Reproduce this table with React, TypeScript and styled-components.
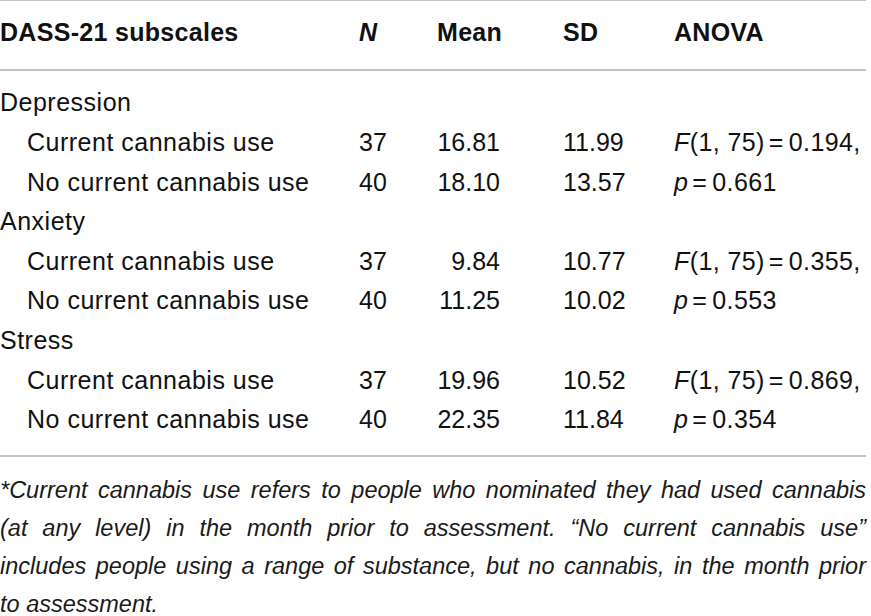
import React from "react";
import styled, { createGlobalStyle } from "styled-components";

const GlobalStyle = createGlobalStyle`
  html, body { margin: 0; padding: 0; background: #ffffff; }
  body { font-family: "Liberation Sans", Arial, Helvetica, sans-serif; color: #111111; }
`;

const COLS = "359px 78px 126px 111px 1fr";
const RULE = "#c4c4c4";

const Sheet = styled.div`
  width: 866px;
  font-family: "Liberation Sans", Arial, Helvetica, sans-serif;
  color: #111111;
`;

const HeadRow = styled.div`
  display: grid;
  grid-template-columns: ${COLS};
  border-top: 1px solid ${RULE};
  border-bottom: 2px solid ${RULE};
  padding: 12px 0 16.4px;
  font-size: 25px;
  line-height: 39.6px;
  font-weight: 700;
  letter-spacing: 0.3px;
`;

const HeadCell = styled.div<{ $italic?: boolean }>`
  font-style: ${(p) => (p.$italic ? "italic" : "normal")};
  white-space: nowrap;
`;

const Body = styled.div`
  display: flex;
  flex-direction: column;
  padding: 12.5px 0 15px;
  border-bottom: 2px solid ${RULE};
`;

const Row = styled.div`
  display: grid;
  grid-template-columns: ${COLS};
  font-size: 25px;
  line-height: 39.6px;
  height: 39.6px;
`;

const Label = styled.div<{ $indent?: boolean }>`
  padding-left: ${(p) => (p.$indent ? "27px" : "0")};
  white-space: nowrap;
  letter-spacing: 0.5px;
`;

const Cell = styled.div<{ $spaced?: boolean }>`
  white-space: nowrap;
  letter-spacing: ${(p) => (p.$spaced ? "0.4px" : "0")};
`;

const Num = styled.span`
  display: inline-block;
  width: 63px;
  text-align: right;
`;

const Ital = styled.span`
  font-style: italic;
`;

const Eq = styled.span`
  margin: 0 5px 0 4px;
`;

const Footnote = styled.div`
  margin-top: 14px;
  font-size: 23.5px;
  line-height: 38px;
  font-style: italic;
  color: #1a1a1a;
`;

const FootLine = styled.div<{ $last?: boolean }>`
  text-align: justify;
  text-align-last: ${(p) => (p.$last ? "left" : "justify")};
  padding-left: ${(p) => (p.$last ? "0" : "0")};
`;

type Sub = {
  label: string;
  n: string;
  mean: string;
  sd: string;
  stat: React.ReactNode;
};

type Group = { name: string; rows: Sub[] };

const F = (v: string) => (
  <>
    <Ital>F</Ital>(1, 75)<Eq>=</Eq>
    {v},
  </>
);
const P = (v: string) => (
  <>
    <Ital>p</Ital>
    <Eq>=</Eq>
    {v}
  </>
);

const groups: Group[] = [
  {
    name: "Depression",
    rows: [
      { label: "Current cannabis use", n: "37", mean: "16.81", sd: "11.99", stat: F("0.194") },
      { label: "No current cannabis use", n: "40", mean: "18.10", sd: "13.57", stat: P("0.661") },
    ],
  },
  {
    name: "Anxiety",
    rows: [
      { label: "Current cannabis use", n: "37", mean: "9.84", sd: "10.77", stat: F("0.355") },
      { label: "No current cannabis use", n: "40", mean: "11.25", sd: "10.02", stat: P("0.553") },
    ],
  },
  {
    name: "Stress",
    rows: [
      { label: "Current cannabis use", n: "37", mean: "19.96", sd: "10.52", stat: F("0.869") },
      { label: "No current cannabis use", n: "40", mean: "22.35", sd: "11.84", stat: P("0.354") },
    ],
  },
];

export default function App() {
  return (
    <>
      <GlobalStyle />
      <Sheet>
        <HeadRow>
          <HeadCell>DASS-21 subscales</HeadCell>
          <HeadCell $italic>N</HeadCell>
          <HeadCell>Mean</HeadCell>
          <HeadCell>SD</HeadCell>
          <HeadCell>ANOVA</HeadCell>
        </HeadRow>
        <Body>
          {groups.map((g) => (
            <React.Fragment key={g.name}>
              <Row>
                <Label>{g.name}</Label>
              </Row>
              {g.rows.map((r) => (
                <Row key={g.name + r.label}>
                  <Label $indent>{r.label}</Label>
                  <Cell>{r.n}</Cell>
                  <Cell>
                    <Num>{r.mean}</Num>
                  </Cell>
                  <Cell>{r.sd}</Cell>
                  <Cell $spaced>{r.stat}</Cell>
                </Row>
              ))}
            </React.Fragment>
          ))}
        </Body>
        <Footnote>
          <FootLine>*Current cannabis use refers to people who nominated they had used cannabis</FootLine>
          <FootLine>(at any level) in the month prior to assessment. “No current cannabis use”</FootLine>
          <FootLine>includes people using a range of substance, but no cannabis, in the month prior</FootLine>
          <FootLine $last>to assessment.</FootLine>
        </Footnote>
      </Sheet>
    </>
  );
}
